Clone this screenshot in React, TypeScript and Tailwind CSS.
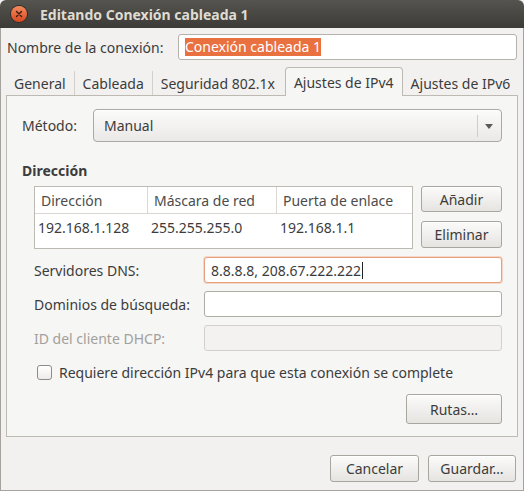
import React from "react";

const font = "font-['Noto_Sans','DejaVu_Sans',sans-serif]";

const Button = ({ label, className = "" }: { label: string; className?: string }) => (
  <div
    className={`flex items-center justify-center rounded-[3px] border border-[#a9a59f] bg-gradient-to-b from-[#fbfbfa] to-[#e6e4e1] text-[14px] text-[#3c3c3c] shadow-[inset_0_1px_0_#ffffff] ${className}`}
  >
    {label}
  </div>
);

const Field = ({ className = "", children }: { className?: string; children?: React.ReactNode }) => (
  <div className={`flex h-[26px] items-center rounded-[3px] border px-[6px] text-[14px] ${className}`}>{children}</div>
);

export default function App() {
  const tabs = ["General", "Cableada", "Seguridad 802.1x"];

  return (
    <div className={`${font} flex h-[491px] w-[524px] flex-col bg-[#f2f1f0] text-[#3c3c3c]`}>
      {/* Title bar */}
      <div className="flex h-[28px] shrink-0 items-center rounded-t-[6px] bg-gradient-to-b from-[#55544f] to-[#3c3b37] pl-[11px]">
        <div className="flex h-[16px] w-[16px] items-center justify-center rounded-full bg-gradient-to-b from-[#f58a5c] to-[#d4471c] shadow-[0_0_0_1px_#2e2d2a]">
          <svg width="8" height="8" viewBox="0 0 8 8">
            <path d="M1.5 1.5 L6.5 6.5 M6.5 1.5 L1.5 6.5" stroke="#3a1a0e" strokeWidth="1.4" strokeLinecap="round" />
          </svg>
        </div>
        <span className="ml-[13px] text-[14px] font-bold text-[#dfdbd2]">Editando Conexión cableada 1</span>
      </div>

      <div className="flex flex-1 flex-col border-x border-b border-[#a6a39e]">
        {/* Connection name */}
        <div className="mt-[6px] flex items-center pl-[6px] pr-[6px]">
          <span className="w-[171px] text-[14px]">Nombre de la conexión:</span>
          <Field className="flex-1 border-[#b5b1ab] bg-white">
            <span className="bg-[#e9703f] leading-[18px] text-white">Conexión cableada 1</span>
          </Field>
        </div>

        {/* Tabs */}
        <div className="mt-[7px] flex h-[28px] items-end whitespace-nowrap px-[5px]">
          {tabs.map((t, i) => (
            <div key={t} className="flex h-[24px] items-center">
              <span className="px-[8px] text-[14px] text-[#3c3c3c]">{t}</span>
              {i < tabs.length - 1 && <div className="h-[24px] w-px bg-[#d3d0cc]" />}
            </div>
          ))}
          <div className="relative -mb-px ml-[2px] flex h-[29px] items-center rounded-t-[4px] border border-b-0 border-[#bdb9b3] bg-[#f6f6f5] px-[8px] text-[14px]">
            Ajustes de IPv4
          </div>
          <div className="flex h-[24px] items-center px-[8px] text-[14px]">Ajustes de IPv6</div>
        </div>

        {/* Panel */}
        <div className="mx-[5px] flex h-[342px] flex-col border border-[#bdb9b3] bg-[#f6f6f5] px-[15px]">
          <div className="mt-[13px] flex items-center">
            <span className="w-[71px] text-[14px]">Método:</span>
            <div className="flex h-[33px] flex-1 items-center rounded-[4px] border border-[#aca8a2] bg-gradient-to-b from-[#fbfbfa] to-[#ebe9e7] shadow-[inset_0_1px_0_#ffffff]">
              <span className="flex-1 pl-[10px] text-[14px]">Manual</span>
              <div className="h-[22px] w-px bg-[#d0ccc7]" />
              <svg width="22" height="10" viewBox="0 0 22 10" className="mr-[1px]">
                <path d="M7 3 L15 3 L11 8 Z" fill="#5a5a5a" />
              </svg>
            </div>
          </div>

          <div className="mt-[18px] text-[14px] font-bold">Dirección</div>

          <div className="mt-[5px] flex pl-[12px]">
            <div className="h-[63px] w-[379px] border border-[#bdb9b3] bg-white">
              <div className="flex h-[27px] border-b border-[#dad7d3] text-[14px] text-[#4c4c4c]">
                <div className="flex w-[113px] items-center border-r border-[#dad7d3] pl-[6px]">Dirección</div>
                <div className="flex w-[129px] items-center border-r border-[#dad7d3] pl-[6px]">Máscara de red</div>
                <div className="flex flex-1 items-center pl-[6px]">Puerta de enlace</div>
              </div>
              <div className="flex h-[26px] items-center text-[14px] text-[#3c3c3c]">
                <div className="w-[113px] pl-[3px]">192.168.1.128</div>
                <div className="w-[129px] pl-[3px]">255.255.255.0</div>
                <div className="flex-1 pl-[3px]">192.168.1.1</div>
              </div>
            </div>
            <div className="ml-[8px] flex flex-1 flex-col gap-[9px]">
              <Button label="Añadir" className="h-[26px]" />
              <Button label="Eliminar" className="h-[27px]" />
            </div>
          </div>

          <div className="mt-[8px] flex flex-col gap-[8px] pl-[12px]">
            <div className="flex items-center">
              <span className="w-[170px] text-[14px]">Servidores DNS:</span>
              <Field className="flex-1 border-[#e7a07e] bg-white shadow-[0_0_0_1px_#f6d6c6]">
                <span>8.8.8.8, 208.67.222.222</span>
                <span className="ml-[1px] h-[17px] w-px bg-[#222]" />
              </Field>
            </div>
            <div className="flex items-center">
              <span className="w-[170px] text-[14px]">Dominios de búsqueda:</span>
              <Field className="flex-1 border-[#b0aca6] bg-white" />
            </div>
            <div className="flex items-center">
              <span className="w-[170px] text-[14px] text-[#a3a09b]">ID del cliente DHCP:</span>
              <Field className="flex-1 border-[#d3d0cc] bg-[#f3f2f1]" />
            </div>
          </div>

          <div className="mt-[11px] flex items-center pl-[15px]">
            <div className="h-[15px] w-[15px] rounded-[3px] border border-[#8f8b86] bg-gradient-to-b from-[#ffffff] to-[#eeecea]" />
            <span className="ml-[7px] text-[14px]">Requiere dirección IPv4 para que esta conexión se complete</span>
          </div>

          <div className="mt-[11px] flex justify-end">
            <Button label="Rutas…" className="h-[30px] w-[96px]" />
          </div>
        </div>

        {/* Dialog buttons */}
        <div className="mt-[18px] flex justify-end gap-[9px] pr-[7px]">
          <Button label="Cancelar" className="h-[27px] w-[89px]" />
          <Button label="Guardar…" className="h-[27px] w-[88px]" />
        </div>
      </div>
    </div>
  );
}
